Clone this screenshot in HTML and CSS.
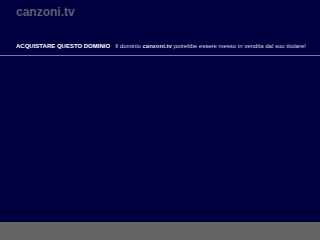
FILE: index.html
```html
<!DOCTYPE html>
<html lang="it">

<head>
    <meta charset="UTF-8">
    <meta name="viewport" content="width=device-width, initial-scale=1.0">
    <title>canzoni.tv</title>
    <link rel="stylesheet" href="styles.css">
</head>

<body>
    <div class="header">
        <div class="logo">canzoni.tv</div>
    </div>
    <div class="sale-bar">
        <span class="sale-title">ACQUISTARE QUESTO DOMINIO</span>
        <span class="sale-text">Il dominio <b>canzoni.tv</b> potrebbe essere messo in vendita dal suo titolare!</span>
    </div>
    <div class="content"></div>
    <div class="footer"></div>
</body>

</html>
```

FILE: styles.css
```css
body {
    margin: 0;
    padding: 0;
    height: 100vh;
    display: flex;
    flex-direction: column;
    background-color: #000040;
    font-family: "Liberation Sans", Arial, sans-serif;
}

.header {
    height: 40px;
    padding-left: 16px;
}

.logo {
    padding-top: 5px;
    font-size: 12px;
    font-weight: bold;
    color: #5c5c74;
}

.sale-bar {
    display: flex;
    align-items: baseline;
    gap: 5px;
    padding: 3px 16px 6px;
    border-bottom: 1px solid #7a7a9a;
    color: #ffffff;
    font-size: 6px;
    white-space: nowrap;
}

.sale-title {
    font-weight: bold;
    flex-shrink: 0;
}

.sale-text {
    color: #d8d8e8;
    flex-shrink: 0;
}

.content {
    flex: 1;
}

.footer {
    height: 18px;
    background-color: #656565;
}
```
